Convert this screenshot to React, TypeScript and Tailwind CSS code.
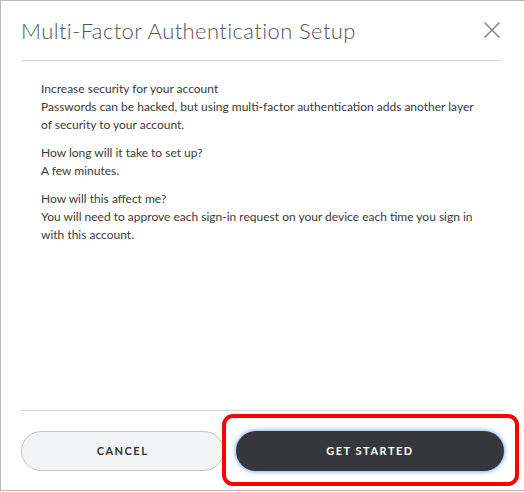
import React from "react";

export default function App() {
  return (
    <div
      className="relative w-[524px] h-[491px] bg-white border-t border-l border-b border-[#b9b9b9] flex flex-col"
      style={{ fontFamily: "Lato, 'Open Sans', sans-serif" }}
    >
      <div className="flex items-center justify-between h-[59px] pl-[20px] pr-[22px]">
        <h1 className="text-[22px] leading-none text-[#555555] font-light tracking-[0.4px]">
          Multi-Factor Authentication Setup
        </h1>
        <button className="w-[18px] h-[18px] mr-[1px] mt-[-2px] text-[#8a8a8a]">
          <svg viewBox="0 0 18 18" width="18" height="18" fill="none" stroke="currentColor" strokeWidth="1.6">
            <path d="M1.5 1.5 L16.5 16.5 M16.5 1.5 L1.5 16.5" />
          </svg>
        </button>
      </div>
      <div className="ml-[20px] mr-[22px] h-px bg-[#d8d8d8]" />
      <div className="flex-1 pl-[40px] pt-[19px] text-[12px] leading-[18px] text-[#3a3a3a] flex flex-col gap-[10px]">
        <div className="w-[441px] flex flex-col gap-[10px]">
          <p>
            Increase security for your account
            <br />
            Passwords can be hacked, but using multi-factor authentication adds another layer of security to your account.
          </p>
          <p>
            How long will it take to set up?
            <br />
            A few minutes.
          </p>
          <p>
            How will this affect me?
            <br />
            You will need to approve each sign-in request on your device each time you sign in with this account.
          </p>
        </div>
      </div>
      <div className="ml-[20px] mr-[22px] h-px bg-[#d8d8d8]" />
      <div className="flex items-center pl-[20px] pt-[20px] pb-[19px] gap-[12px]">
        <button className="w-[203px] h-[40px] rounded-full bg-[#f3f4f6] border border-[#c6c6c6] text-[11px] font-bold tracking-[1.5px] text-[#333] ">
          CANCEL
        </button>
        <button className="w-[268px] h-[40px] rounded-full bg-[#36373d] text-white text-[11px] font-bold tracking-[1.5px] shadow-[0_0_4px_1px_#7fb0f0]">
          GET STARTED
        </button>
      </div>
      <div className="absolute left-[221px] top-[413px] w-[297px] h-[72px] border-[4px] border-[#ff0000] rounded-[11px] pointer-events-none" />
    </div>
  );
}
